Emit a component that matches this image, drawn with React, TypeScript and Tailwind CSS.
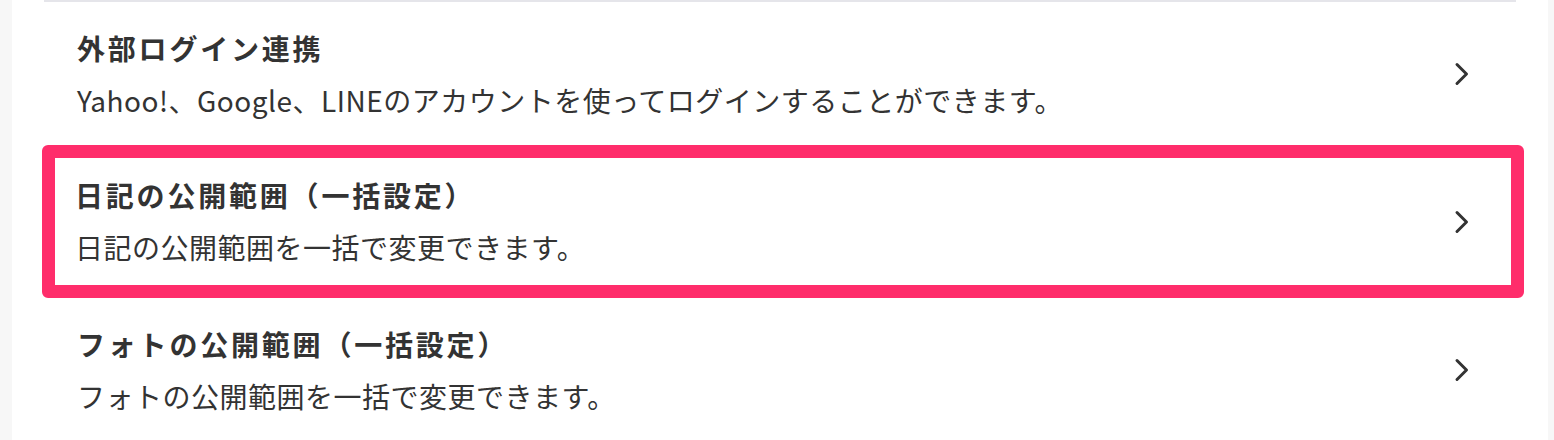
import React from "react";

type Item = {
  title: string;
  description: string;
  highlighted?: boolean;
};

const items: Item[] = [
  {
    title: "外部ログイン連携",
    description: "Yahoo!、Google、LINEのアカウントを使ってログインすることができます。",
  },
  {
    title: "日記の公開範囲（一括設定）",
    description: "日記の公開範囲を一括で変更できます。",
    highlighted: true,
  },
  {
    title: "フォトの公開範囲（一括設定）",
    description: "フォトの公開範囲を一括で変更できます。",
  },
];

const Chevron = () => (
  <svg width="16" height="24" viewBox="0 0 16 24" fill="none" className="shrink-0">
    <polyline
      points="3,2.5 12.5,12 3,21.5"
      stroke="#333333"
      strokeWidth="3"
      strokeLinecap="round"
      strokeLinejoin="round"
    />
  </svg>
);

const RowContent = ({ item }: { item: Item }) => (
  <div className="flex flex-1 items-center justify-between">
    <div>
      <h3 className="text-[28px] font-bold leading-[38px] tracking-[0.1em] text-[#333333]">
        {item.title}
      </h3>
      <p className="mt-[13px] text-[28px] leading-[40px] tracking-[0.5px] text-[#333333]">
        {item.description}
      </p>
    </div>
    <Chevron />
  </div>
);

const App = () => {
  return (
    <div
      className="min-h-[440px] bg-[#f7f7f7] pl-[12px] pr-[6px]"
      style={{ fontFamily: '"Noto Sans CJK JP", "Noto Sans", sans-serif' }}
    >
      <div className="h-[440px] overflow-hidden bg-white px-[32px]">
        <div className="h-[2px] bg-[#e5e5ea]" />
        <ul>
          {items.map((item) =>
            item.highlighted ? (
              <li
                key={item.title}
                className="-mt-[1px] -ml-[2px] -mr-[8px] flex h-[153px] rounded-[6px] border-[13px] border-[#ff2d6b] pl-[20px] pr-[41px]"
              >
                <RowContent item={item} />
              </li>
            ) : (
              <li
                key={item.title}
                className="flex h-[144px] pl-[33px] pr-[46px]"
              >
                <RowContent item={item} />
              </li>
            ),
          )}
        </ul>
      </div>
    </div>
  );
};

export default App;
